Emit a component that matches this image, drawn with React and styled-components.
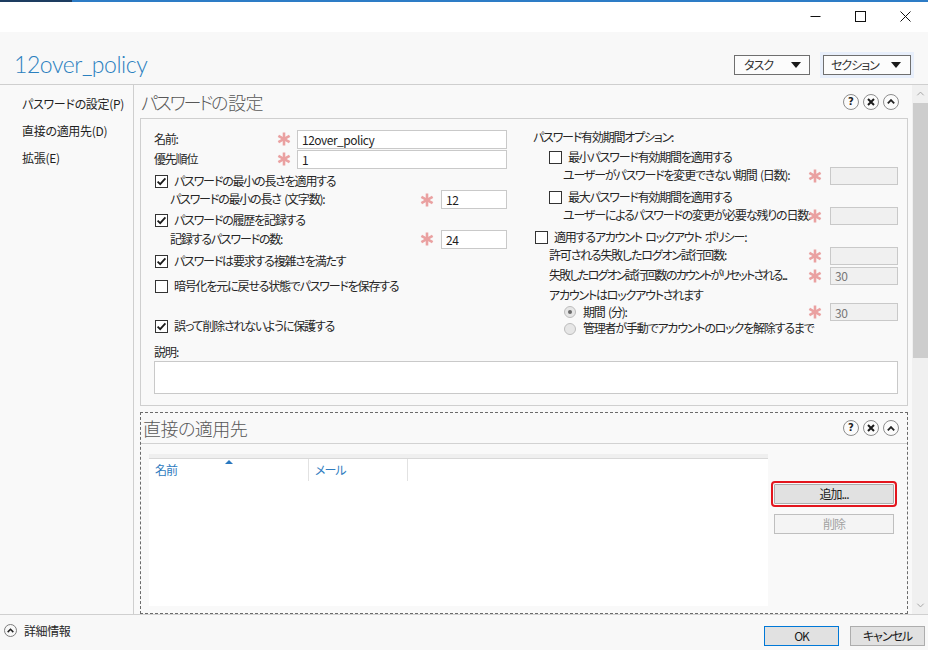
import React from 'react'
import styled, { createGlobalStyle } from 'styled-components'

const GlobalStyle = createGlobalStyle`
  html, body {
    margin: 0;
    padding: 0;
    background: #fff;
  }
  body {
    font-family: "Noto Sans CJK JP", "Noto Sans", sans-serif;
    font-size: 12px;
    letter-spacing: -1px;
    color: #262626;
    font-feature-settings: "palt";
  }
  * {
    box-sizing: border-box;
  }
`

// little drawings

const Chevron = ({ up = true, color = '#222', w = 8, h = 5, sw = 1.8 }) => (
  <svg width={w} height={h} viewBox="0 0 8 5">
    <path
      d={up ? 'M0.8 4.3 L4 1.1 L7.2 4.3' : 'M0.8 0.7 L4 3.9 L7.2 0.7'}
      fill="none"
      stroke={color}
      strokeWidth={sw}
    />
  </svg>
)

const Caret = () => (
  <svg width="10" height="6" viewBox="0 0 10 6">
    <path d="M0 0 H10 L5 6 Z" fill="#1a1a1a" />
  </svg>
)

const Star = () => (
  <svg width="14" height="14" viewBox="0 0 14 14">
    <g stroke="#eaa1a1" strokeWidth="2.6" strokeLinecap="butt">
      <line x1="7" y1="0.5" x2="7" y2="13.5" />
      <line x1="1.4" y1="3.8" x2="12.6" y2="10.2" />
      <line x1="1.4" y1="10.2" x2="12.6" y2="3.8" />
    </g>
  </svg>
)

const Tick = () => (
  <svg width="11" height="11" viewBox="0 0 11 11">
    <path d="M1.6 5.6 L4.2 8.2 L9.4 2.4" fill="none" stroke="#1a1a1a" strokeWidth="1.8" />
  </svg>
)

// window frame

const Window = styled.div`
  width: 928px;
  height: 650px;
  display: flex;
  flex-direction: column;
  overflow: hidden;
  background: #fff;
`

const AccentLine = styled.div`
  height: 2px;
  flex-shrink: 0;
  background: linear-gradient(to right, #1d3c60 0 72px, #2d7cc6 72px);
`

const TitleBar = styled.div`
  height: 30px;
  flex-shrink: 0;
  display: flex;
  justify-content: flex-end;
  background: #fff;
`

const WinButton = styled.div`
  width: 45px;
  height: 30px;
  display: flex;
  align-items: center;
  justify-content: center;
  padding-bottom: 2px;
`

const Header = styled.header`
  height: 53px;
  flex-shrink: 0;
  display: flex;
  align-items: center;
  padding: 13px 17px 0 14px;
  background: #f8f8f8;
  border-bottom: 1px solid #cfcfcf;
`

const PolicyTitle = styled.h1`
  flex: 1;
  margin: 0;
  font-family: "Segoe UI", Lato, "Open Sans", sans-serif;
  font-weight: 300;
  font-size: 23px;
  letter-spacing: -0.45px;
  line-height: 1;
  color: #2b80bf;
`

const Dropdown = styled.div`
  display: flex;
  align-items: center;
  justify-content: space-between;
  width: ${p => p.$w}px;
  height: 20px;
  margin-left: ${p => p.$ml || 0}px;
  padding: 0 ${p => p.$pr}px 0 ${p => p.$pl}px;
  border: 1px solid #6f6f6f;
  background: #fcfcfc;
  box-shadow: ${p => (p.$hot ? '0 0 0 3px #e8effb' : 'none')};
  color: #333;
  line-height: 1;
`

// body

const Body = styled.div`
  flex: 1;
  display: flex;
  min-height: 0;
  background: #f9f9f9;
`

const Nav = styled.nav`
  width: 134px;
  flex-shrink: 0;
  padding-top: 5px;
  border-right: 1px solid #cfcfcf;
`

const NavItem = styled.div`
  height: 27px;
  padding-left: 22px;
  display: flex;
  align-items: center;
  color: #1f1f1f;
  letter-spacing: -0.3px;
  white-space: nowrap;
`

const Content = styled.main`
  flex: 1;
  display: flex;
  flex-direction: column;
  padding: 0 4px 0 6px;
  min-width: 0;
`

const Scrollbar = styled.div`
  width: 16px;
  flex-shrink: 0;
  display: flex;
  flex-direction: column;
  background: #f0f0f0;
`

const ScrollArrow = styled.div`
  height: 17px;
  display: flex;
  align-items: center;
  justify-content: center;
`

const ScrollThumb = styled.div`
  height: 255px;
  margin: 1px 0 0 1px;
  background: #cdcdcd;
`

const ScrollTrack = styled.div`
  flex: 1;
`

// sections

const SectionHead = styled.div`
  height: ${p => p.$h}px;
  display: flex;
  align-items: center;
  padding: 0 ${p => p.$pr}px 0 ${p => p.$pl}px;
  border-bottom: ${p => (p.$line ? '1px solid #d2d2d2' : 'none')};
`

const SectionTitle = styled.h2`
  flex: 1;
  margin: 0;
  font-size: 18px;
  font-weight: 300;
  letter-spacing: -0.5px;
  line-height: 1;
  color: #575757;
`

// katakana in Meiryo UI is narrower than in Noto
const Kana = styled.span`
  letter-spacing: -2.2px;
`

const HeadIcons = styled.div`
  display: flex;
  gap: 4px;
`

const RoundIcon = styled.span`
  width: 16px;
  height: 16px;
  border-radius: 50%;
  border: 1px solid #8d8d8d;
  background: #fbfbfb;
  display: flex;
  align-items: center;
  justify-content: center;
  font-family: "DejaVu Sans", sans-serif;
  font-size: 10px;
  font-weight: bold;
  letter-spacing: 0;
  color: #222;
  line-height: 1;
`

const FormBox = styled.div`
  border: 1px solid #cfcfcf;
  padding: 10px 9px 11px 13px;
`

const Columns = styled.div`
  display: grid;
  grid-template-columns: 353px minmax(0, 1fr);
  column-gap: 26px;
`

const Column = styled.div`
  display: flex;
  flex-direction: column;
  min-width: 0;
`

const Row = styled.div`
  display: flex;
  align-items: center;
  height: ${p => p.$h || 20}px;
  margin-top: ${p => p.$mt || 0}px;
  padding-left: ${p => p.$indent || 0}px;
  line-height: 1;
  letter-spacing: -1.2px;
  word-spacing: 2px;
  color: #262626;
`

const Label = styled.span`
  flex: 1;
  min-width: 0;
  white-space: nowrap;
  letter-spacing: ${p => (p.$tight ? '-1.75px' : 'inherit')};
  word-spacing: ${p => (p.$tight ? '1px' : 'inherit')};
  padding-bottom: 1px;
`

const Required = styled.span`
  width: 16px;
  flex-shrink: 0;
  display: flex;
  justify-content: center;
  margin-right: ${p => p.$gap}px;
`

const TextBox = styled.input`
  width: ${p => p.$w}px;
  height: ${p => p.$h || 19}px;
  flex-shrink: 0;
  padding: 0 4px;
  border: 1px solid #c9c9c9;
  background: ${p => (p.disabled ? '#f0f0f0' : '#fff')};
  color: ${p => (p.disabled ? '#777' : '#1f1f1f')};
  font: inherit;
  font-size: 12px;
  letter-spacing: -0.5px;
  outline: none;
`

const CheckBox = styled.span`
  width: 13px;
  height: 13px;
  flex-shrink: 0;
  margin-right: 6px;
  border: 1px solid #333;
  background: #fff;
  display: flex;
  align-items: center;
  justify-content: center;
`

const Radio = styled.span`
  width: 12px;
  height: 12px;
  flex-shrink: 0;
  margin-right: 7px;
  border-radius: 50%;
  border: 1px solid #bdbdbd;
  background: #e6e6e6;
  display: flex;
  align-items: center;
  justify-content: center;

  &::after {
    content: '';
    width: 4px;
    height: 4px;
    border-radius: 50%;
    background: ${p => (p.$on ? '#6a6a6a' : 'transparent')};
  }
`

const Caption = styled.div`
  height: 14px;
  margin-top: 9px;
  line-height: 14px;
`

const Description = styled.div`
  height: 33px;
  margin-top: 2px;
  border: 1px solid #c9c9c9;
  background: #fff;
`

const FocusSection = styled.section`
  flex: 1;
  display: flex;
  flex-direction: column;
  margin-top: 6px;
  border: 1px dashed #6b6b6b;
`

const ListArea = styled.div`
  flex: 1;
  display: flex;
  padding: 10px 13px 7px 8px;
`

const List = styled.div`
  flex: 1;
  display: flex;
  flex-direction: column;
  background: #fff;
`

const ListTopBar = styled.div`
  height: 5px;
  background: #efefef;
  border-bottom: 1px solid #d8d8d8;
`

const ListHeader = styled.div`
  display: flex;
  height: 22px;
`

const ColHead = styled.div`
  position: relative;
  width: ${p => (p.$w ? `${p.$w}px` : 'auto')};
  flex: ${p => (p.$w ? 'none' : '1')};
  display: flex;
  align-items: center;
  padding-left: 6px;
  border-right: ${p => (p.$w ? '1px solid #e2e2e2' : 'none')};
  color: #2f7cc0;
  line-height: 1;
`

const SortMark = styled.span`
  position: absolute;
  top: 1px;
  left: 50%;
  margin-left: -4px;
  width: 0;
  height: 0;
  border-left: 4px solid transparent;
  border-right: 4px solid transparent;
  border-bottom: 4px solid #2a78bf;
`

const SideButtons = styled.div`
  width: 120px;
  margin-left: 6px;
  padding-top: 30px;
  display: flex;
  flex-direction: column;
  gap: 10px;
`

const PushButton = styled.div`
  width: ${p => (p.$w ? `${p.$w}px` : '100%')};
  height: 20px;
  display: flex;
  align-items: center;
  justify-content: center;
  border: 1px solid ${p => (p.$default ? '#0078d7' : p.disabled ? '#bfbfbf' : '#adadad')};
  border-radius: ${p => (p.$focus ? '1px' : '0')};
  background: ${p => (p.disabled ? '#f4f4f4' : '#e1e1e1')};
  color: ${p => (p.disabled ? '#a2a2a2' : '#1a1a1a')};
  outline: ${p => (p.$focus ? '2px solid #e3151d' : 'none')};
  outline-offset: 1px;
  line-height: 1;
`

// footer

const Footer = styled.footer`
  height: 36px;
  flex-shrink: 0;
  display: flex;
  align-items: flex-start;
  padding: 0 3px 0 4px;
  border-top: 1px solid #d0d0d0;
  background: #f8f8f8;
`

const MoreInfo = styled.div`
  flex: 1;
  display: flex;
  align-items: center;
  gap: 7px;
  margin-top: 9px;
  letter-spacing: -0.4px;
  line-height: 1;
`

const SmallRound = styled.span`
  width: 13px;
  height: 13px;
  border-radius: 50%;
  border: 1px solid #7d7d7d;
  display: flex;
  align-items: center;
  justify-content: center;
`

const DialogButtons = styled.div`
  display: flex;
  gap: 11px;
  margin-top: 11px;
`

const SectionIcons = () => (
  <HeadIcons>
    <RoundIcon>?</RoundIcon>
    <RoundIcon>
      <svg width="8" height="8" viewBox="0 0 8 8">
        <path d="M1 1 L7 7 M7 1 L1 7" stroke="#1a1a1a" strokeWidth="2" />
      </svg>
    </RoundIcon>
    <RoundIcon>
      <Chevron />
    </RoundIcon>
  </HeadIcons>
)

const Check = ({ on, children, indent, mt, h = 18 }) => (
  <Row $indent={indent} $mt={mt} $h={h}>
    <CheckBox>{on && <Tick />}</CheckBox>
    <Label>{children}</Label>
  </Row>
)

const Field = ({ label, value = '', disabled, indent, mt, h, w, gap, tight }) => (
  <Row $indent={indent} $mt={mt} $h={h}>
    <Label $tight={tight}>{label}</Label>
    <Required $gap={gap}>
      <Star />
    </Required>
    <TextBox $w={w} $h={disabled ? 18 : 19} defaultValue={value} disabled={disabled} readOnly />
  </Row>
)

const App = () => {
  return (
    <>
      <GlobalStyle />
      <Window>
        <AccentLine />
        <TitleBar>
          <WinButton>
            <svg width="11" height="11" viewBox="0 0 11 11">
              <line x1="0.5" y1="5.5" x2="10.5" y2="5.5" stroke="#111" strokeWidth="1" />
            </svg>
          </WinButton>
          <WinButton>
            <svg width="11" height="11" viewBox="0 0 11 11">
              <rect x="0.5" y="0.5" width="10" height="10" fill="none" stroke="#111" strokeWidth="1" />
            </svg>
          </WinButton>
          <WinButton>
            <svg width="11" height="11" viewBox="0 0 11 11">
              <path d="M0.5 0.5 L10.5 10.5 M10.5 0.5 L0.5 10.5" stroke="#111" strokeWidth="1" />
            </svg>
          </WinButton>
        </TitleBar>

        <Header>
          <PolicyTitle>12over_policy</PolicyTitle>
          <Dropdown $w={76} $pl={9} $pr={8}>
            タスク
            <Caret />
          </Dropdown>
          <Dropdown $w={88} $pl={7} $pr={9} $ml={13} $hot>
            セクション
            <Caret />
          </Dropdown>
        </Header>

        <Body>
          <Nav>
            <NavItem>パスワードの設定(P)</NavItem>
            <NavItem>直接の適用先(D)</NavItem>
            <NavItem>拡張(E)</NavItem>
          </Nav>

          <Content>
            <section>
              <SectionHead $h={33} $pl={1} $pr={9}>
                <SectionTitle>
                  <Kana>パスワード</Kana>の設定
                </SectionTitle>
                <SectionIcons />
              </SectionHead>
              <FormBox>
                <Columns>
                  <Column>
                    <Field label="名前:" value="12over_policy" w={210} gap={5} />
                    <Field label="優先順位" value="1" w={210} gap={5} />
                    <Check on mt={3} indent={1}>パスワードの最小の長さを適用する</Check>
                    <Field label="パスワードの最小の長さ (文字数):" value="12" indent={16} h={19} w={66} gap={6} />
                    <Check on mt={3} h={17} indent={1}>パスワードの履歴を記録する</Check>
                    <Field label="記録するパスワードの数:" value="24" indent={16} w={66} gap={6} />
                    <Check on mt={3} indent={1}>パスワードは要求する複雑さを満たす</Check>
                    <Check mt={7} indent={1}>暗号化を元に戻せる状態でパスワードを保存する</Check>
                    <Check on mt={22} indent={1}>誤って削除されないように保護する</Check>
                  </Column>

                  <Column>
                    <Row $h={16}>パスワード有効期間オプション:</Row>
                    <Check mt={3} indent={16}>最小パスワード有効期間を適用する</Check>
                    <Field label="ユーザーがパスワードを変更できない期間 (日数):" disabled indent={30} h={19} w={68} gap={7} />
                    <Check mt={3} indent={16}>最大パスワード有効期間を適用する</Check>
                    <Field label="ユーザーによるパスワードの変更が必要な残りの日数:" disabled indent={30} h={19} w={68} gap={7} />
                    <Check mt={3} indent={2}>適用するアカウント ロックアウト ポリシー:</Check>
                    <Field label="許可される失敗したログオン試行回数:" disabled indent={16} h={19} w={68} gap={7} />
                    <Field
                      label="失敗したログオン試行回数のカウントがリセットされる..."
                      value="30"
                      disabled
                      tight
                      indent={16}
                      mt={1}
                      h={19}
                      w={68}
                      gap={7}
                    />
                    <Row $indent={16} $mt={1} $h={17}>アカウントはロックアウトされます</Row>
                    <Row $indent={31} $h={18}>
                      <Radio $on />
                      <Label>期間 (分):</Label>
                      <Required $gap={7}>
                        <Star />
                      </Required>
                      <TextBox $w={68} $h={18} defaultValue="30" disabled readOnly />
                    </Row>
                    <Row $indent={31} $h={15}>
                      <Radio />
                      <Label>管理者が手動でアカウントのロックを解除するまで</Label>
                    </Row>
                  </Column>
                </Columns>
                <Caption>説明:</Caption>
                <Description />
              </FormBox>
            </section>

            <FocusSection>
              <SectionHead $h={31} $pl={2} $pr={8} $line>
                <SectionTitle>直接の適用先</SectionTitle>
                <SectionIcons />
              </SectionHead>
              <ListArea>
                <List>
                  <ListTopBar />
                  <ListHeader>
                    <ColHead $w={160}>
                      <SortMark />
                      名前
                    </ColHead>
                    <ColHead $w={99}>メール</ColHead>
                    <ColHead />
                  </ListHeader>
                </List>
                <SideButtons>
                  <PushButton $focus>追加...</PushButton>
                  <PushButton disabled>削除</PushButton>
                </SideButtons>
              </ListArea>
            </FocusSection>
          </Content>

          <Scrollbar>
            <ScrollArrow>
              <Chevron color="#a6a6a6" w={9} h={5} sw={1} />
            </ScrollArrow>
            <ScrollThumb />
            <ScrollTrack />
            <ScrollArrow>
              <Chevron up={false} color="#a6a6a6" w={9} h={5} sw={1} />
            </ScrollArrow>
          </Scrollbar>
        </Body>

        <Footer>
          <MoreInfo>
            <SmallRound>
              <Chevron w={7} h={5} />
            </SmallRound>
            詳細情報
          </MoreInfo>
          <DialogButtons>
            <PushButton $w={75} $default>OK</PushButton>
            <PushButton $w={75}>キャンセル</PushButton>
          </DialogButtons>
        </Footer>
      </Window>
    </>
  )
}

export default App
